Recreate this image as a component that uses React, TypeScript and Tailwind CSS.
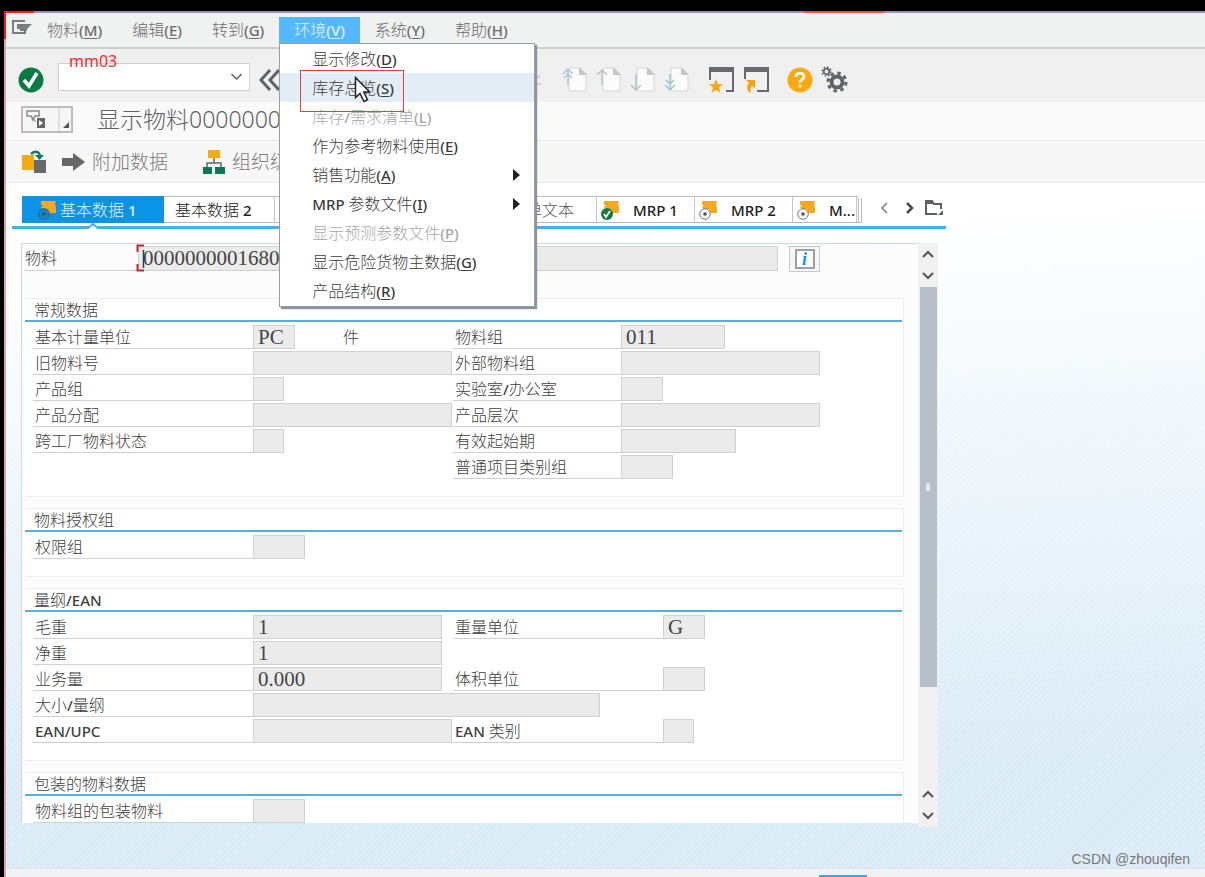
import { Fragment } from 'react'
import type { ReactNode } from 'react'

const cjk = "font-['Noto_Sans','Noto_Sans_CJK_SC',sans-serif]"

// Latin runs are set one pixel smaller and heavier than the Chinese around them
function Mixed({ text, hot }: { text: string; hot?: string }) {
  return (
    <>
      {text.split(/([A-Za-z0-9/. ]+)/).map((part, i) =>
        i % 2 ? (
          <span key={i} className="text-[15px] font-medium">{part}</span>
        ) : (
          <Fragment key={i}>{part}</Fragment>
        )
      )}
      {hot && (
        <span className="text-[15px] font-medium">
          (<u className="underline-offset-2">{hot}</u>)
        </span>
      )}
    </>
  )
}

const menus = [
  { text: '物料', hot: 'M' },
  { text: '编辑', hot: 'E' },
  { text: '转到', hot: 'G' },
  { text: '环境', hot: 'V', open: true },
  { text: '系统', hot: 'Y' },
  { text: '帮助', hot: 'H' },
]

const envItems = [
  { text: '显示修改', hot: 'D' },
  { text: '库存总览', hot: 'S', active: true },
  { text: '库存/需求清单', hot: 'L', disabled: true },
  { text: '作为参考物料使用', hot: 'E' },
  { text: '销售功能', hot: 'A', sub: true },
  { text: 'MRP 参数文件', hot: 'I', sub: true },
  { text: '显示预测参数文件', hot: 'P', disabled: true },
  { text: '显示危险货物主数据', hot: 'G' },
  { text: '产品结构', hot: 'R' },
]

function EnvMenu() {
  return (
    <div className="absolute left-0 top-full z-20 w-64 border border-[#9a9da0] bg-white pb-px font-light shadow-[2px_2px_1px_#8f9499]">
      {envItems.map((item) => (
        <button
          key={item.text}
          disabled={item.disabled}
          className={`flex h-[29px] w-full items-center justify-between whitespace-nowrap pl-8 pr-3.5 ${
            item.active ? 'bg-[#e2edf5]' : ''
          } ${item.disabled ? 'text-[#a8a8a8]' : 'text-[#3c3c3c]'}`}
        >
          <span><Mixed text={item.text} hot={item.hot} /></span>
          {item.sub && (
            <svg width="7" height="12" viewBox="0 0 7 12" fill="#222">
              <path d="M0 0l7 6-7 6z" />
            </svg>
          )}
        </button>
      ))}
    </div>
  )
}

function MenuBar() {
  return (
    <nav className="flex h-9 shrink-0 items-center border-b-2 border-[#cdcfce] bg-[#f0f1f1] pl-1.5 font-light">
      <svg width="20" height="16" viewBox="0 0 20 16" fill="none" className="mb-1 shrink-0">
        <path d="M13 1H1v12h12v-2" stroke="#7a7d80" strokeWidth="2" />
        <path d="M5 4h15l-5 5v2H8V9H5z" fill="#7a7d80" />
      </svg>
      {menus.map((m) => (
        <div key={m.text} className="relative">
          <button
            className={`h-[26px] whitespace-nowrap px-[15px] ${m.open ? 'bg-[#55b8ff] text-[#e3f3ff]' : 'text-[#6c6c6c]'}`}
          >
            <Mixed text={m.text} hot={m.hot} />
          </button>
          {m.open && <EnvMenu />}
        </div>
      ))}
    </nav>
  )
}

function PageIcon({ arrow, color }: { arrow: string; color: string }) {
  return (
    <svg width="26" height="27" viewBox="0 0 26 27" fill="none">
      <path d="M7 2h11l6 6v17H7z" fill="#fbfbfb" stroke="#d3d6d7" />
      <path d="M17 1l8 8h-8z" fill="#c3c7c9" />
      <path d={arrow} stroke={color} strokeWidth="1.5" />
    </svg>
  )
}

function ToolButton({ label, children }: { label: string; children: ReactNode }) {
  return <button aria-label={label} className="shrink-0">{children}</button>
}

function Toolbar() {
  return (
    <div className="flex h-[53px] shrink-0 items-center bg-[#f0f0f0] pl-3 pt-2">
      <ToolButton label="Enter">
        <svg width="26" height="26" viewBox="0 0 26 26">
          <circle cx="13" cy="13" r="12.5" fill="#0b7a43" />
          <path d="M6 13l5 6L19 6" stroke="#fff" strokeWidth="3.6" fill="none" />
        </svg>
      </ToolButton>
      <div className="relative mb-1.5 ml-3.5 h-7 w-48 shrink-0">
        <input aria-label="Command" className="h-full w-full border border-[#d0d0d0] bg-white px-2" />
        <svg width="11" height="7" viewBox="0 0 11 7" className="absolute right-2 top-2.5" fill="none" stroke="#6f6f6f" strokeWidth="1.6">
          <path d="M.5 1l5 5 5-5" />
        </svg>
      </div>
      <ToolButton label="Back">
        <svg width="22" height="22" viewBox="0 0 22 22" fill="none" stroke="#606468" strokeWidth="3" className="ml-2">
          <path d="M12 1L3 11l9 10M21 1l-9 10 9 10" />
        </svg>
      </ToolButton>
      <div className="ml-[244px] flex shrink-0 items-center">
        <svg width="18" height="20" viewBox="0 0 18 20" fill="none" stroke="#b5cdd8" strokeWidth="1.6">
          <path d="M12 0v9m-4-4l4 4 4-4M8 14h9" />
        </svg>
        <div className="ml-5 flex items-center gap-2">
          <ToolButton label="First page">
            <PageIcon color="#a9cccf" arrow="M6 19V3M1 8l5-5 5 5M2 12l4-4 4 4" />
          </ToolButton>
          <ToolButton label="Previous page">
            <PageIcon color="#b9c5c8" arrow="M6 19V4M1 9l5-5 5 5" />
          </ToolButton>
          <ToolButton label="Next page">
            <PageIcon color="#a9c8cb" arrow="M6 8v16M1 19l5 5 5-5" />
          </ToolButton>
          <ToolButton label="Last page">
            <PageIcon color="#9cc9cc" arrow="M6 8v16M1 19l5 5 5-5M2 14l4 4 4-4" />
          </ToolButton>
        </div>
        <div className="ml-[18px] flex items-center gap-2">
          <ToolButton label="New window">
            <svg width="27" height="27" viewBox="0 0 27 27" fill="none">
              <path d="M2 14V2h23v23h-7" stroke="#666a6e" strokeWidth="2" />
              <path d="M1 1h25v5H1z" fill="#666a6e" />
              <path d="M8 13l2 5 5 .3-4 3.3 1.4 5.1L8 23.9l-4.4 2.8L5 21.600l-4-3.300 5-.3z" fill="#f5a81c" />
            </svg>
          </ToolButton>
          <ToolButton label="Shortcut">
            <svg width="27" height="27" viewBox="0 0 27 27" fill="none">
              <path d="M2 13V2h23v23H14" stroke="#666a6e" strokeWidth="2" />
              <path d="M1 1h25v5H1z" fill="#666a6e" />
              <path d="M3 14h9v8l-3-2c-2 2-2 4-1 7-4-1-5-6-2-10z" fill="#f7a210" />
            </svg>
          </ToolButton>
        </div>
        <div className="ml-[17px] flex items-center gap-2">
          <ToolButton label="Help">
            <svg width="26" height="26" viewBox="0 0 26 26" fill="none">
              <circle cx="13" cy="13" r="12.5" fill="#ffa70f" />
              <path d="M9 10c0-5 8-5 8-.5 0 3-4 3-4 6" stroke="#fff" strokeWidth="2.8" />
              <path d="M11.5 17.5h3v3h-3z" fill="#fff" />
            </svg>
          </ToolButton>
          <ToolButton label="Settings">
            <svg width="27" height="27" viewBox="0 0 27 27" fill="none" stroke="#606468">
              <circle cx="16" cy="16" r="5.5" strokeWidth="4" />
              <circle cx="16" cy="16" r="9" strokeWidth="3" strokeDasharray="3.5 3.57" />
              <circle cx="5.5" cy="5.5" r="2.8" strokeWidth="1.8" />
              <circle cx="5.5" cy="5.5" r="4.5" strokeWidth="1.5" strokeDasharray="1.7 1.83" />
            </svg>
          </ToolButton>
        </div>
      </div>
    </div>
  )
}

function TitleBar() {
  return (
    <div className="flex h-[39px] shrink-0 items-center border-b border-[#e9e9e9] bg-[#fafafa] pb-1 pl-[15px]">
      <button aria-label="Services" className="flex h-[27px] w-[52px] shrink-0 items-stretch border-2 border-[#bcbcbc] bg-[#f6f6f6]">
        <svg width="48" height="23" viewBox="0 0 48 23" fill="none">
          <path d="M4 3h12v5h-4l-2 4-2-4H4z" stroke="#8b8b8b" strokeWidth="1.5" />
          <path d="M9 9l4 5" stroke="#8b8b8b" />
          <path d="M14 10h8v10h-8z" fill="#666" />
          <path d="M16 12l4 3-4 3z" fill="#fff" />
          <path d="M36 0v23" stroke="#c8c8c8" />
          <path d="M46 14v6h-6z" fill="#555" />
        </svg>
      </button>
      <h1 className="ml-6 whitespace-nowrap text-[23px] font-light leading-8 text-[#5e6266]">显示物料0000000</h1>
    </div>
  )
}

function ActionBar() {
  return (
    <div className="flex h-[42px] shrink-0 items-center border-b border-[#e6e6e6] bg-[#f7f7f7] pl-4 text-[19px] font-light text-[#7b7b7b]">
      <ToolButton label="Other material">
        <svg width="24" height="24" viewBox="0 0 24 24" fill="none">
          <path d="M0 5h12v15H0z" fill="#f5a912" />
          <path d="M12 10h12v13H12z" fill="#666a6e" />
          <path d="M9 4c5-4 9-2 9 3" stroke="#0d7f57" strokeWidth="2.5" />
          <path d="M13 5h9l-4.5 5z" fill="#0d7f57" />
        </svg>
      </ToolButton>
      <button className="ml-4 flex items-center gap-1.5 whitespace-nowrap">
        <svg width="24" height="20" viewBox="0 0 24 20" fill="#666">
          <path d="M0 6h11V1l12 9-12 9v-5H0z" />
        </svg>
        附加数据
      </button>
      <button className="ml-[34px] flex items-center gap-1.5 whitespace-nowrap">
        <svg width="24" height="24" viewBox="0 0 24 24" fill="none">
          <path d="M6 0h12v8H6z" fill="#f5a912" />
          <path d="M12 8v5M5 18v-5h14v5" stroke="#666" strokeWidth="1.5" />
          <path d="M1 17h9v7H1zM13 17h10v7H13z" fill="#0d7853" />
        </svg>
        组织级
      </button>
    </div>
  )
}

function ViewIcon({ kind }: { kind: 'active' | 'done' | 'open' }) {
  return (
    <svg width="18" height="20" viewBox="0 0 18 20" fill="none" className="shrink-0">
      <path d="M3 1h15l-1 3 1 3v6h-7l-1-4H5L3 7l2-2H3z" fill="#f8a81d" />
      {kind === 'done' ? (
        <>
          <circle cx="6" cy="14" r="6" fill="#16793f" />
          <path d="M3 14l2 3 4-6" stroke="#fff" strokeWidth="1.8" />
        </>
      ) : (
        <>
          <circle cx="6" cy="14" r="5.3" fill={kind === 'open' ? '#f4f4f4' : '#1686cc'} stroke={kind === 'open' ? '#7d7d7d' : '#35617d'} />
          <circle cx="6" cy="14" r="1.8" fill={kind === 'open' ? '#555' : '#2a5878'} />
        </>
      )}
    </svg>
  )
}

function Tabs() {
  const tab = 'flex h-full shrink-0 items-center whitespace-nowrap border-r border-[#c6c6c6] bg-white'
  return (
    <div className="relative flex h-[33px] shrink-0 items-start border-b-[3px] border-[#46b1ea] pl-2.5 font-light text-[#222]">
      <div className="flex h-[27px] w-[836px] border-b border-t border-[#b9b9b9]" role="tablist">
        <button role="tab" aria-selected="true" className="-my-px flex w-[142px] shrink-0 items-center gap-1 bg-[#0b93e6] pl-4 text-[#e3f3fd]">
          <ViewIcon kind="active" />
          <span className="whitespace-nowrap"><Mixed text="基本数据 1" /></span>
        </button>
        <button role="tab" className={`${tab} w-[111px] pl-[11px]`}><span><Mixed text="基本数据 2" /></span></button>
        <button role="tab" className={`${tab} w-[322px] justify-end pr-[22px] text-[#555]`}>单文本</button>
        <button role="tab" className={`${tab} w-[98px] gap-3.5 pl-1`}><ViewIcon kind="done" /><Mixed text="MRP 1" /></button>
        <button role="tab" className={`${tab} w-[98px] gap-3.5 pl-1`}><ViewIcon kind="open" /><Mixed text="MRP 2" /></button>
        <button role="tab" className={`${tab} w-16 gap-3.5 pl-1`}><ViewIcon kind="open" /><Mixed text="M..." /></button>
      </div>
      <div className="flex h-[27px] items-center">
        <div className="flex h-full gap-0.5 border-b border-[#b9b9b9] pt-0.5">
          <span className="border-r border-[#b9b9b9]" />
          <span className="border-r border-[#b9b9b9]" />
        </div>
        <button aria-label="Scroll left" className="mb-1 ml-[18px]">
          <svg width="8" height="12" viewBox="0 0 8 12" fill="none" stroke="#9a9a9a" strokeWidth="2"><path d="M7 1L2 6l5 5" /></svg>
        </button>
        <button aria-label="Scroll right" className="mb-1 ml-[18px]">
          <svg width="8" height="12" viewBox="0 0 8 12" fill="none" stroke="#4a4a4a" strokeWidth="2.5"><path d="M1 1l5 5-5 5" /></svg>
        </button>
        <button aria-label="Tab list" className="mb-1 ml-2.5">
          <svg width="19" height="17" viewBox="0 0 19 17" fill="none">
            <path d="M2 15V2h6l2 3h7v5M1 15h12" stroke="#5c6064" strokeWidth="2" />
            <path d="M1 1h7l2 4H1zM19 11v5h-5z" fill="#5c6064" />
          </svg>
        </button>
      </div>
      <svg width="12" height="7" viewBox="0 0 12 7" className="absolute -bottom-[3px] left-[75px]" fill="#fff" stroke="#46b1ea" strokeWidth="2">
        <path d="M0 7l6-5 6 5" />
      </svg>
    </div>
  )
}

interface FieldProps {
  id: string
  label: string
  labelWidth: string
  width: string
  value?: string
  note?: string
}

function Field({ id, label, labelWidth, width, value = '', note }: FieldProps) {
  return (
    <>
      <label htmlFor={id} className={`flex h-6 shrink-0 items-center whitespace-nowrap border-b border-[#cfcfcf] pl-0.5 font-light text-[#404040] ${labelWidth}`}>
        <span><Mixed text={label} /></span>
      </label>
      <input
        id={id}
        readOnly
        defaultValue={value}
        className={`h-6 shrink-0 border border-[#d0d0d0] bg-[#ebebec] px-1 font-['Liberation_Serif',serif] text-[21px] text-[#444] ${width}`}
      />
      {note && <span className="ml-12 font-light text-[#404040]">{note}</span>}
    </>
  )
}

interface Cell {
  label: string
  width: string
  value?: string
  note?: string
}

interface Section {
  title: string
  rightLabel: string
  rows: { left?: Cell; right?: Cell }[]
}

const sections: Section[] = [
  {
    title: '常规数据',
    rightLabel: 'w-[168px]',
    rows: [
      { left: { label: '基本计量单位', width: 'w-[42px]', value: 'PC', note: '件' }, right: { label: '物料组', width: 'w-[104px]', value: '011' } },
      { left: { label: '旧物料号', width: 'w-[199px]' }, right: { label: '外部物料组', width: 'w-[199px]' } },
      { left: { label: '产品组', width: 'w-[31px]' }, right: { label: '实验室/办公室', width: 'w-[42px]' } },
      { left: { label: '产品分配', width: 'w-[199px]' }, right: { label: '产品层次', width: 'w-[199px]' } },
      { left: { label: '跨工厂物料状态', width: 'w-[31px]' }, right: { label: '有效起始期', width: 'w-[115px]' } },
      { right: { label: '普通项目类别组', width: 'w-[52px]' } },
    ],
  },
  {
    title: '物料授权组',
    rightLabel: 'w-[168px]',
    rows: [{ left: { label: '权限组', width: 'w-[52px]' } }],
  },
  {
    title: '量纲/EAN',
    rightLabel: 'w-[210px]',
    rows: [
      { left: { label: '毛重', width: 'w-[189px]', value: '1' }, right: { label: '重量单位', width: 'w-[42px]', value: 'G' } },
      { left: { label: '净重', width: 'w-[189px]', value: '1' } },
      { left: { label: '业务量', width: 'w-[189px]', value: '0.000' }, right: { label: '体积单位', width: 'w-[42px]' } },
      { left: { label: '大小/量纲', width: 'w-[347px]' } },
      { left: { label: 'EAN/UPC', width: 'w-[199px]' }, right: { label: 'EAN 类别', width: 'w-[31px]' } },
    ],
  },
  {
    title: '包装的物料数据',
    rightLabel: 'w-[168px]',
    rows: [{ left: { label: '物料组的包装物料', width: 'w-[52px]' } }],
  },
]

function SectionBox({ section }: { section: Section }) {
  return (
    <section className="shrink-0 border border-l-0 border-[#eeeeef] bg-white pb-[15px]">
      <h2 className="mr-px flex h-[23px] items-center border-b-2 border-[#58aed8] pl-[9px] font-light text-[#404040]">
        <span><Mixed text={section.title} /></span>
      </h2>
      <div className="flex flex-col gap-0.5 pb-0.5 pl-2 pt-[3px]">
        {section.rows.map(({ left, right }, i) => (
          <div key={i} className="flex h-6">
            <div className="flex w-[420px] shrink-0 items-center">
              {left && <Field id={`${section.title}-l${i}`} labelWidth="w-[220px]" {...left} />}
            </div>
            {right && <Field id={`${section.title}-r${i}`} labelWidth={section.rightLabel} {...right} />}
          </div>
        ))}
      </div>
    </section>
  )
}

function Chevron({ up }: { up?: boolean }) {
  return (
    <button aria-label={up ? 'Scroll up' : 'Scroll down'} className="flex h-[22px] w-full shrink-0 items-center justify-center">
      <svg width="12" height="8" viewBox="0 0 12 8" fill="none" stroke="#555" strokeWidth="2">
        <path d={up ? 'M1 7l5-5 5 5' : 'M1 1l5 5 5-5'} />
      </svg>
    </button>
  )
}

function ScrollBar() {
  return (
    <div className="-mb-1 flex w-5 shrink-0 flex-col bg-[#f1f1f1]">
      <Chevron up />
      <Chevron />
      <div className="mx-auto flex w-[17px] flex-[400] flex-col items-center justify-center bg-[#b6bec8]">
        <span className="h-2 w-1 bg-[#e3e8ee]" />
      </div>
      <div className="flex-[96]" />
      <Chevron up />
      <Chevron />
    </div>
  )
}

function MaterialRow() {
  return (
    <div className="flex h-[27px] shrink-0 items-start pl-0.5 pt-0.5">
      <label htmlFor="material" className="flex h-[25px] w-[113px] shrink-0 items-center border-b border-[#cfcfcf] pl-px font-light text-[#404040]">
        物料
      </label>
      <div className="relative ml-px w-[640px]">
        <input
          id="material"
          readOnly
          defaultValue="0000000001680"
          className="h-[25px] w-full border border-[#d0d0d0] bg-[#ebebec] px-1 font-['Liberation_Serif',serif] text-[21px] text-[#444]"
        />
        <svg width="9" height="28" viewBox="0 0 9 28" fill="none" className="absolute -left-0.5 -top-0.5">
          <path d="M8 1.500H1.500V8M1.500 20v6.500H8" stroke="#c4282d" strokeWidth="2" />
          <path d="M7.500 6v18" stroke="#1d3f66" strokeWidth="1.500" />
        </svg>
      </div>
      <button aria-label="Info" className="ml-[11px] flex h-[26px] w-[31px] shrink-0 items-center justify-center border border-[#c6c9cc] bg-[#f6f6f6]">
        <span className="flex h-5 w-5 items-center justify-center border-2 border-[#9da0a4] bg-white font-['Liberation_Serif',serif] text-lg font-bold italic leading-none text-[#1493dc]">
          i
        </span>
      </button>
    </div>
  )
}

export default function App() {
  return (
    <div className={`relative flex h-screen min-h-[600px] flex-col overflow-hidden border-l-4 border-t-[11px] border-black bg-white text-base leading-5 ${cjk}`}>
      <div className="flex h-0.5 shrink-0 bg-[#9a90b4]">
        <span className="w-[30px] bg-[#ff1a10]" />
        <span className="ml-[770px] w-20 bg-[#f4503f]" />
      </div>
      <div className="flex min-h-0 flex-1 flex-col border-l-2 border-[#d9a3a0]">
        <MenuBar />
        <Toolbar />
        <TitleBar />
        <ActionBar />
        <main className="min-h-0 flex-1 bg-[linear-gradient(177deg,#ffffff_10%,#ffffff00_85%),repeating-linear-gradient(135deg,#d6e8f5_0px,#e3f0f9_2px,#d6e8f5_4px)] pb-[45px] pl-1.5 pt-[13px]">
          <div className="flex h-full w-full max-w-[934px] flex-col">
            <Tabs />
            <div className="mt-3.5 flex min-h-0 flex-1 pl-[9px] pr-2">
              <div className="flex min-w-0 flex-1 flex-col overflow-hidden border-l border-t border-[#cdd8e4] bg-[#fcfcfd]">
                <MaterialRow />
                <div className="mt-[27px] flex flex-col gap-[11px] pl-[3px] pr-3.5">
                  {sections.map((s) => <SectionBox key={s.title} section={s} />)}
                </div>
              </div>
              <ScrollBar />
            </div>
          </div>
        </main>
        <footer className="flex h-[9px] shrink-0 items-end border-t border-[#dfe5ec] bg-[#f2f3f5]">
          <span className="ml-[813px] h-0.5 w-12 bg-[#38a8ee]" />
        </footer>
      </div>

      {/* annotations over the window */}
      <span className="absolute left-0 top-0 h-7 w-0.5 bg-[#ff1a10]" />
      <span className="absolute left-[65px] top-10 text-[#f8292c]">mm03</span>
      <span className="absolute left-[296px] top-[59px] z-30 h-[42px] w-[104px] border border-[#f03a3a]" />
      <svg width="18" height="27" viewBox="0 0 18 27" className="absolute left-[350px] top-[65px] z-30">
        <path d="M1.500 1.500v20l4.500-4 4 8 3.500-1.800-3.800-7.700h6z" fill="#fff" stroke="#222" strokeWidth="1.500" />
      </svg>
      <span className="absolute bottom-2 right-[15px] font-['Liberation_Sans',sans-serif] text-sm text-[#777]">CSDN @zhouqifen</span>
    </div>
  )
}
